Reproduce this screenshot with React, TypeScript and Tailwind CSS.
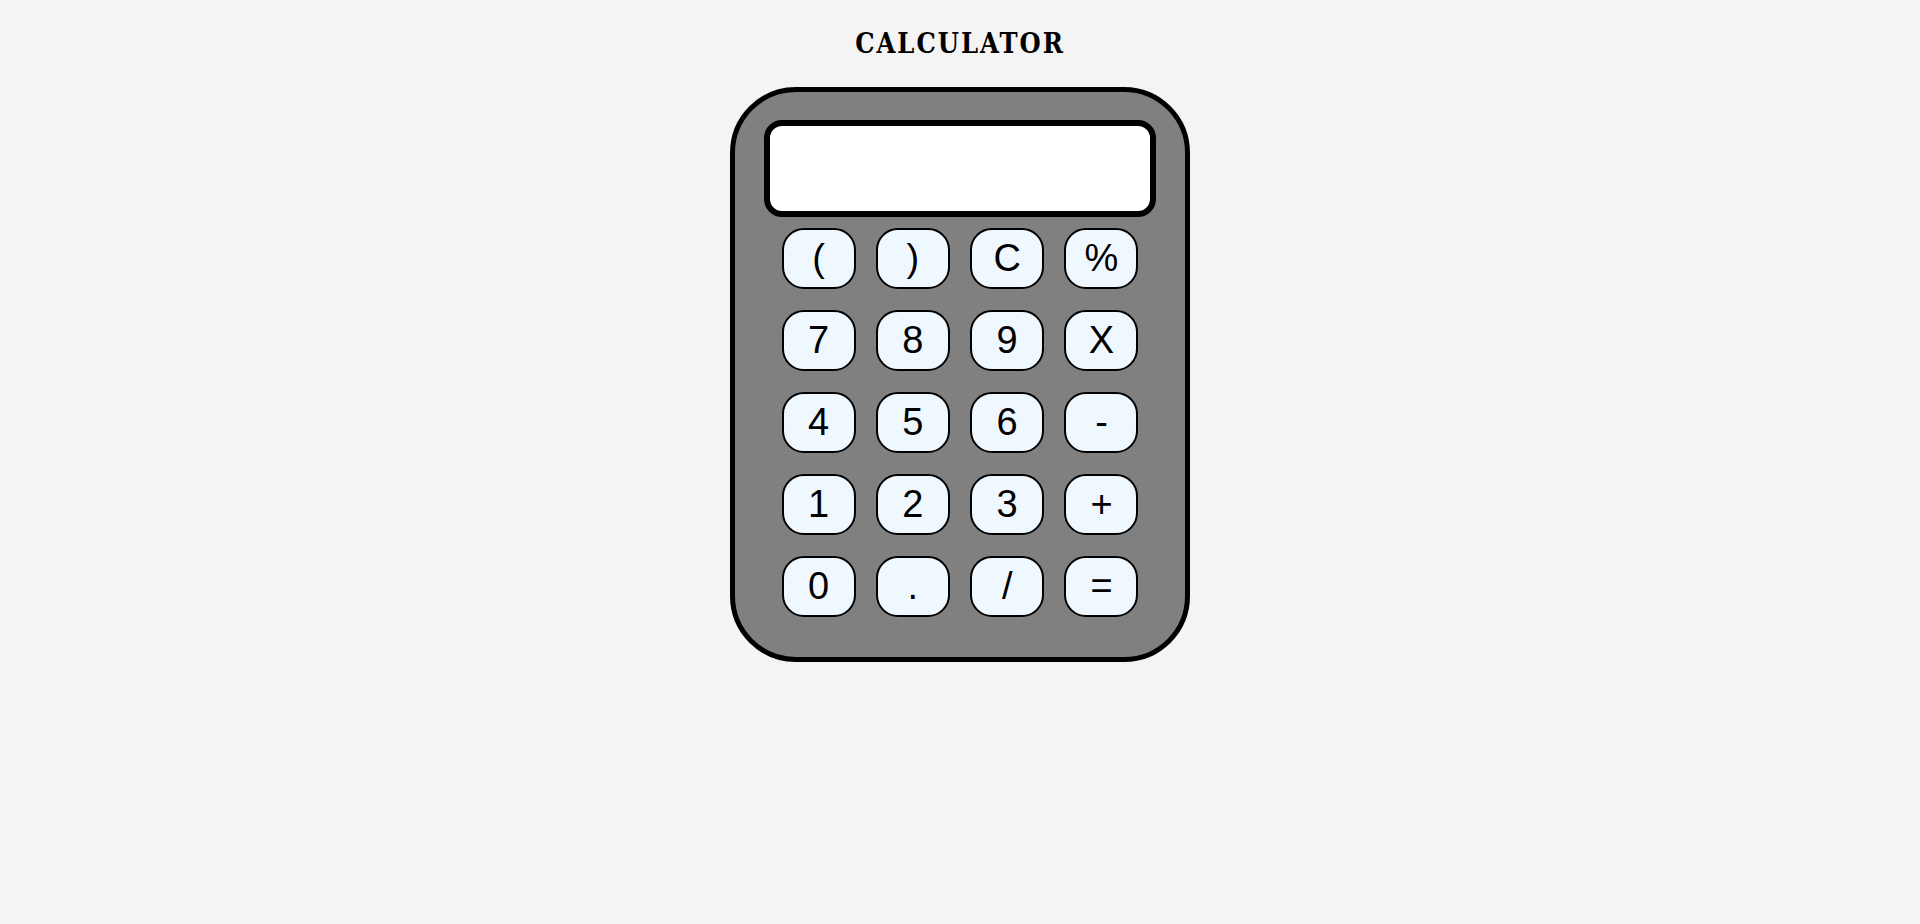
import React from 'react';

const keys = ['(', ')', 'C', '%', '7', '8', '9', 'X', '4', '5', '6', '-', '1', '2', '3', '+', '0', '.', '/', '='];

const App: React.FC = () => {
  return (
    <div className="min-h-screen bg-[#f4f4f4] flex flex-col items-center">
      <h1 className="mt-[24px] text-[27px] leading-[40px] font-bold text-black font-stretch-condensed tracking-[2px] font-['DejaVu_Serif','Liberation_Serif',serif]">
        CALCULATOR
      </h1>

      {/* calculator body */}
      <div className="mt-[23px] w-[460px] h-[575px] bg-[#808080] border-[5px] border-black rounded-[66px] flex flex-col items-center pt-[28px]">
        <div className="w-[392px] h-[97px] bg-white border-[6px] border-black rounded-[18px]" />

        <div className="mt-[11px] w-[357px] grid grid-cols-[repeat(4,74px)] justify-between gap-y-[21px]">
          {keys.map((k) => (
            <button
              key={k}
              className="w-[74px] h-[61px] bg-[#f0f8ff] border-2 border-black rounded-[22px] flex items-center justify-center text-[38px] text-black font-['Liberation_Sans',Arial,sans-serif]"
            >
              {k}
            </button>
          ))}
        </div>
      </div>
    </div>
  );
};

export default App;
